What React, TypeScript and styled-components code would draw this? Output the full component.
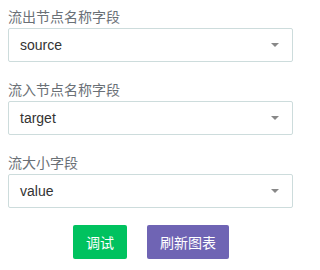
import React from "react";
import styled, { createGlobalStyle } from "styled-components";

const Global = createGlobalStyle`
  html, body { margin: 0; padding: 0; background: #fff; }
  body { font-family: "Liberation Sans", Arial, "Noto Sans CJK SC", sans-serif; }
`;

const Panel = styled.div`
  width: 301px;
  box-sizing: border-box;
  padding: 6px 8px 0 8px;
  display: flex;
  flex-direction: column;
`;

const Field = styled.div`
  display: flex;
  flex-direction: column;
  gap: 2px;
  margin-bottom: 17px;
  &:last-of-type { margin-bottom: 15px; }
`;

const Label = styled.div`
  font-family: "Noto Sans CJK SC", sans-serif;
  font-size: 14px;
  line-height: 20px;
  color: #6a7076;
`;

const SelectBox = styled.div`
  height: 34px;
  box-sizing: border-box;
  border: 1px solid #cddcdc;
  border-radius: 2px;
  display: flex;
  align-items: center;
  justify-content: space-between;
  padding: 0 13px 0 11px;
  font-family: "Liberation Sans", Arial, sans-serif;
  font-size: 14px;
  color: #333;
`;

const Caret = styled.span`
  width: 0;
  height: 0;
  border-left: 4px solid transparent;
  border-right: 4px solid transparent;
  border-top: 4px solid #888;
`;

const Actions = styled.div`
  display: flex;
  justify-content: center;
  gap: 20px;
  padding-left: 1px;
`;

const Button = styled.button<{ $bg: string; $w: number }>`
  width: ${(p) => p.$w}px;
  height: 34px;
  border: none;
  border-radius: 2px;
  background: ${(p) => p.$bg};
  color: #fff;
  font-family: "Noto Sans CJK SC", sans-serif;
  font-size: 14px;
  padding: 0;
  cursor: pointer;
`;

const fields = [
  { label: "流出节点名称字段", value: "source" },
  { label: "流入节点名称字段", value: "target" },
  { label: "流大小字段", value: "value" },
];

export default function App() {
  return (
    <>
      <Global />
      <Panel>
        {fields.map((f) => (
          <Field key={f.label}>
            <Label>{f.label}</Label>
            <SelectBox>
              <span>{f.value}</span>
              <Caret />
            </SelectBox>
          </Field>
        ))}
        <Actions>
          <Button $bg="#00c25f" $w={54}>调试</Button>
          <Button $bg="#6f64b4" $w={82}>刷新图表</Button>
        </Actions>
      </Panel>
    </>
  );
}
